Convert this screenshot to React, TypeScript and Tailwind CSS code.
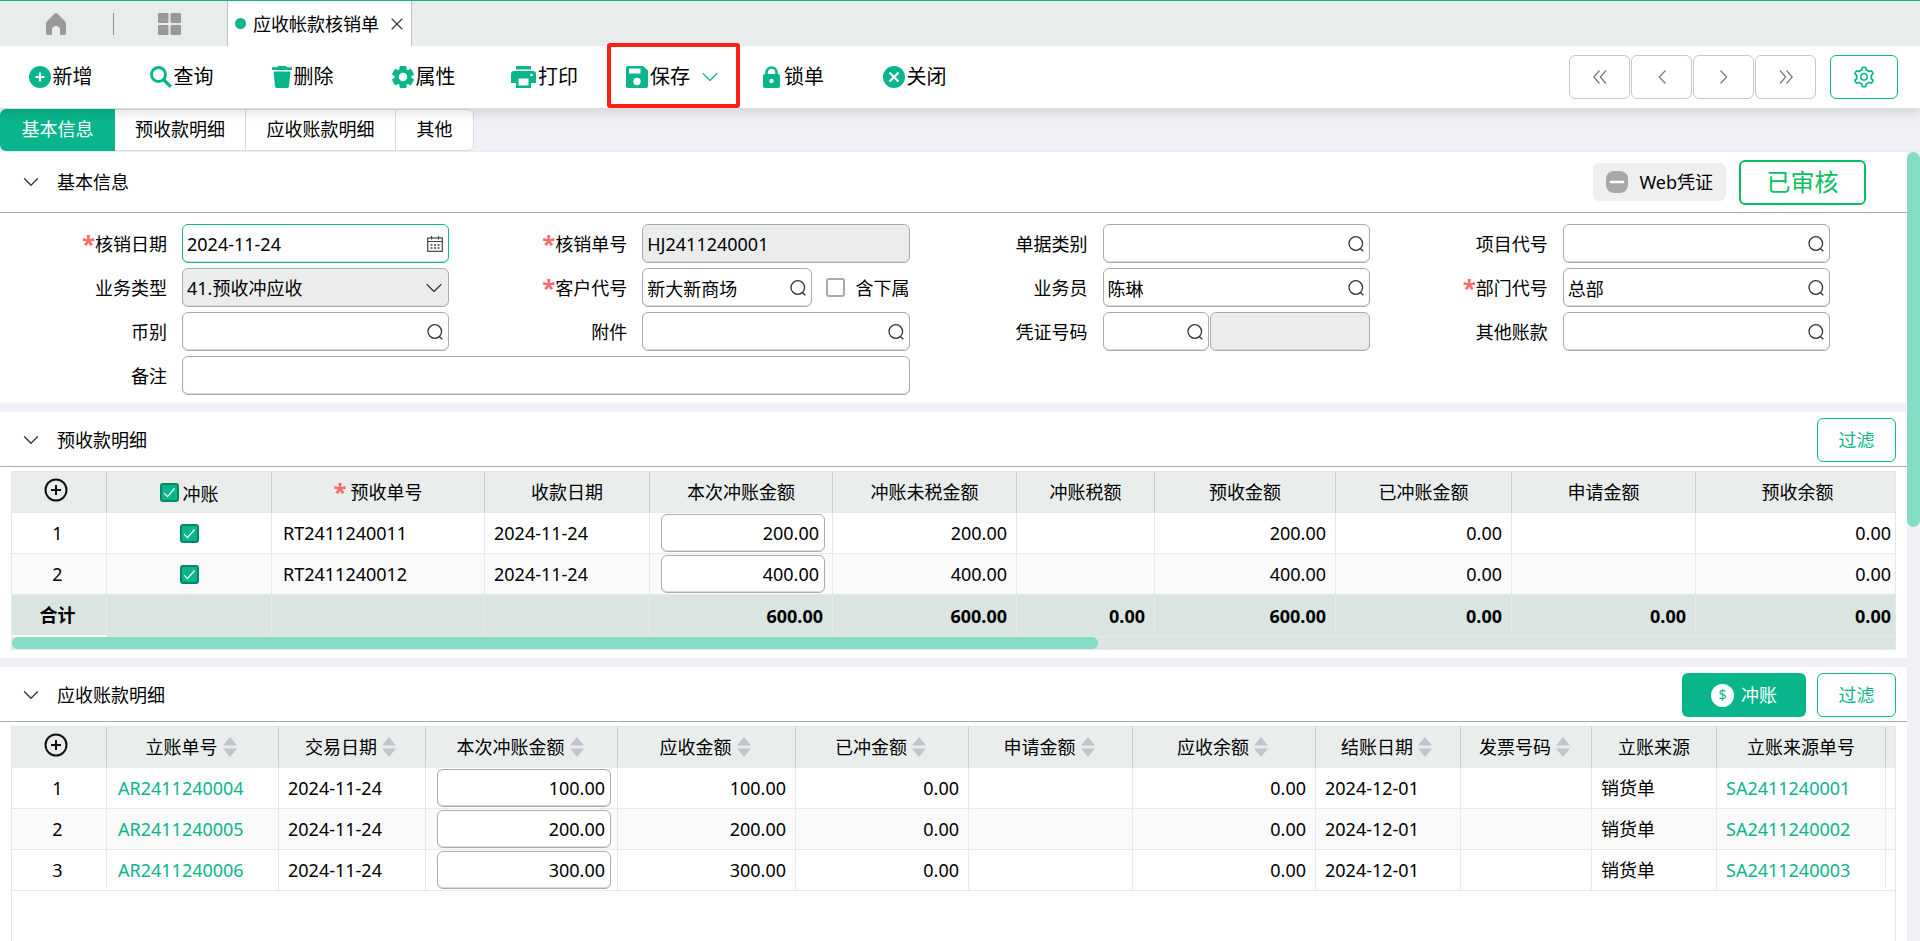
import type { ReactNode } from "react";
import { ChevronDown, X } from "lucide-react";
import { AiOutlineSetting } from "react-icons/ai";

/* ---------- icons ---------- */

const HomeIcon = () => (
  <svg viewBox="0 0 22 22" className="size-[22px] text-[#999]" fill="currentColor">
    <path d="M11 0c.6 0 1 .3 1.500.7L20 8.200c.7.700 1 1.500 1 2.500V20a2 2 0 0 1-2 2h-4v-5a4 4 0 0 0-8 0V22H3a2 2 0 0 1-2-2v-9.300c0-1 .3-1.800 1-2.500L9.500.7C10 .3 10.400 0 11 0z" />
  </svg>
);

const GridIcon = () => (
  <svg viewBox="0 0 23 22" className="h-[22px] w-[23px] text-[#999]" fill="currentColor">
    <rect width="10.500" height="10" rx="1" />
    <rect x="12.500" width="10.500" height="10" rx="1" />
    <rect y="12" width="10.500" height="10" rx="1" />
    <rect x="12.500" y="12" width="10.500" height="10" rx="1" />
  </svg>
);

const PlusCircleIcon = () => (
  <svg viewBox="0 0 22 22" className="size-[22px]">
    <circle cx="11" cy="11" r="11" fill="currentColor" />
    <path d="M11 6.500v9M6.500 11h9" stroke="#fff" strokeWidth="2.200" />
  </svg>
);

const FindIcon = () => (
  <svg viewBox="0 0 22 22" className="size-[22px]" fill="none" stroke="currentColor">
    <circle cx="8.500" cy="8.500" r="7" strokeWidth="3" />
    <path d="M13.500 13.500l7.300 7.300" strokeWidth="3.200" />
  </svg>
);

const TrashIcon = () => (
  <svg viewBox="0 0 20 22" className="h-[22px] w-5" fill="currentColor">
    <path d="M6 0h8l1 1.200h5V4H0V1.200h5z" />
    <path d="M1.500 5.500h17L17 20.200c-.1 1-.9 1.800-2 1.800H5c-1.100 0-1.900-.8-2-1.800z" />
  </svg>
);

const GearIcon = () => (
  <svg viewBox="0 0 22 22" className="size-[22px]">
    <g fill="currentColor">
      <rect x="7.500" y="0" width="7" height="22" rx="1" />
      <rect x="7.500" y="0" width="7" height="22" rx="1" transform="rotate(60 11 11)" />
      <rect x="7.500" y="0" width="7" height="22" rx="1" transform="rotate(120 11 11)" />
      <circle cx="11" cy="11" r="8.500" />
    </g>
    <circle cx="11" cy="11" r="4.200" fill="#fff" />
  </svg>
);

const PrinterIcon = () => (
  <svg viewBox="0 0 25 22" className="h-[22px] w-[25px]">
    <g fill="currentColor">
      <rect x="5" width="15" height="3.500" />
      <path d="M3 5h19a3 3 0 0 1 3 3v9h-5v5H5v-5H0V8a3 3 0 0 1 3-3z" />
    </g>
    <rect x="7.500" y="12.500" width="10" height="7" fill="#fff" />
    <circle cx="20.500" cy="9" r="1.300" fill="#fff" />
  </svg>
);

const SaveIcon = () => (
  <svg viewBox="0 0 22 22" className="size-[22px]">
    <path d="M2 0h15l5 4.500V20a2 2 0 0 1-2 2H2a2 2 0 0 1-2-2V2a2 2 0 0 1 2-2z" fill="currentColor" />
    <rect x="3" y="2.500" width="11.500" height="5" fill="#fff" />
    <circle cx="11" cy="15.500" r="3.700" fill="#fff" />
  </svg>
);

const LockIcon = () => (
  <svg viewBox="0 0 17 22" className="mr-0.5 h-[22px] w-[17px]">
    <path d="M3.500 9V6.500a5 5 0 0 1 10 0V9" fill="none" stroke="currentColor" strokeWidth="2.600" />
    <rect y="8" width="17" height="14" rx="2" fill="currentColor" />
    <circle cx="8.500" cy="15" r="2.200" fill="#fff" />
  </svg>
);

const CloseCircleIcon = () => (
  <svg viewBox="0 0 22 22" className="size-[22px]">
    <circle cx="11" cy="11" r="11" fill="currentColor" />
    <path d="M6.500 6.500l9 9M15.500 6.500l-9 9" stroke="#fff" strokeWidth="2.200" />
  </svg>
);

const LookupIcon = () => (
  <svg viewBox="0 0 16 16" className="size-4 text-[#333]" fill="none" stroke="currentColor" strokeWidth="1.300">
    <circle cx="7.800" cy="7.500" r="6.800" />
    <path d="M12.300 12.500l3 2.700" />
  </svg>
);

const CalendarIcon = () => (
  <svg viewBox="0 0 16 16" className="size-4 text-[#444]" fill="none" stroke="currentColor" strokeWidth="1.200">
    <rect x=".7" y="2" width="14.600" height="13.300" />
    <path d="M.7 5.500h14.600M4.500 0v3.500M11.500 0v3.500" />
    <path d="M3.500 9h2M7 9h2M10.500 9h2M3.500 12h2M7 12h2M10.500 12h2" strokeWidth="1.400" />
  </svg>
);

const AddRowIcon = () => (
  <svg viewBox="0 0 24 24" className="size-6" fill="none" stroke="#111" strokeWidth="2">
    <circle cx="12" cy="12" r="10.500" />
    <path d="M12 7v10M7 12h10" />
  </svg>
);

const SortIcon = () => (
  <svg viewBox="0 0 14 20" className="h-5 w-3.5" fill="#c0c4cc">
    <path d="M7 0l7 8.500H0zM7 20l7-8.500H0z" />
  </svg>
);

const PagerIcon = ({ d }: { d: string }) => (
  <svg viewBox="0 0 14 14" className="size-3.5" fill="none" stroke="currentColor" strokeWidth="1.200">
    <path d={d} />
  </svg>
);

/* ---------- small controls ---------- */

const Star = () => <span className="text-2xl leading-none font-bold text-[#f56c6c]">*</span>;

function TickBox({ id, label, checked = false }: { id: string; label?: string; checked?: boolean }) {
  return (
    <span className="grid">
      <input
        id={id}
        type="checkbox"
        aria-label={label}
        defaultChecked={checked}
        className="peer col-start-1 row-start-1 size-[19px] appearance-none rounded-[3px] border-2 border-[#aaa] bg-white checked:border-[#078764] checked:bg-[#09b68b]"
      />
      <svg
        viewBox="0 0 19 19"
        className="pointer-events-none invisible col-start-1 row-start-1 size-[19px] peer-checked:visible"
        fill="none"
        stroke="#fff"
        strokeWidth="1.200"
      >
        <path d="M4 10.200l3.500 3.500L14.500 5.500" />
      </svg>
    </span>
  );
}

const boxBase = "flex h-[39px] min-w-0 items-center rounded-md border shadow-[inset_0_-1px_0_#dcdcdc]";

function Box({ id, value = "", icon, tone = "plain", grow = "flex-1", label }: {
  id: string;
  value?: string;
  icon?: "search" | "date";
  tone?: "plain" | "gray" | "focus";
  grow?: string;
  label?: string;
}) {
  const look =
    tone === "gray" ? "border-[#aaa] bg-[#ebedec]" : tone === "focus" ? "border-[#09b68b] bg-white" : "border-[#aaa] bg-white";
  return (
    <div className={`${boxBase} ${look} ${grow}`}>
      <input
        id={id}
        type="text"
        aria-label={label}
        defaultValue={value}
        readOnly={tone === "gray"}
        className="h-full w-full min-w-0 flex-1 bg-transparent pl-1 outline-none"
      />
      {icon && (
        <button type="button" aria-label={icon === "date" ? "选择日期" : "查找"} className="mr-[5px] shrink-0">
          {icon === "date" ? <CalendarIcon /> : <LookupIcon />}
        </button>
      )}
    </div>
  );
}

function Field({ id, label, required, wide, children }: {
  id: string;
  label: string;
  required?: boolean;
  wide?: boolean;
  children: ReactNode;
}) {
  return (
    <div className={`flex items-center ${wide ? "col-span-2" : ""}`}>
      <label htmlFor={id} className="flex w-[167px] shrink-0 items-center justify-end">
        {required && <Star />}
        {label}
      </label>
      <div className="ml-[15px] flex min-w-0 flex-1 items-center">{children}</div>
    </div>
  );
}

function SectionHeader({ title, tall, children }: { title: string; tall?: boolean; children: ReactNode }) {
  return (
    <header className={`flex items-center border-b border-[#aaa] pl-[18px] ${tall ? "h-[61px]" : "h-[55px] pt-0.5"}`}>
      <button type="button" className="flex items-center gap-[13px]">
        <ChevronDown size={26} strokeWidth={1.200} className="text-[#333]" />
        <h2>{title}</h2>
      </button>
      <div className="ml-auto flex items-center">{children}</div>
    </header>
  );
}

const FilterButton = () => (
  <button type="button" className="mr-[11px] h-11 w-[79px] rounded-md border border-[#09b68b] text-[#09b68b]">
    过滤
  </button>
);

const th = "h-[41px] border-r border-b border-r-[#c6cbdc] border-b-[#e8eaea] bg-[#e9edec] p-0 text-center font-normal last:border-r-0";
const td = "h-[41px] border-r border-b border-[#e8e8e8] px-[9px] py-0 whitespace-nowrap last:border-r-0";
const rowNo = "h-[41px] border-r border-b border-[#e8e8e8] py-0 pr-[3px] pl-0 text-center";

const AddRowButton = () => (
  <button type="button" aria-label="增加行" className="flex w-full justify-center pr-[7px] pb-1">
    <AddRowIcon />
  </button>
);

const Amount = ({ id, value, label }: { id: string; value: string; label: string }) => (
  <input
    id={id}
    type="text"
    aria-label={label}
    defaultValue={value}
    className="block h-[38px] w-full rounded-md border border-[#aaa] bg-white pr-[5px] text-right shadow-[inset_0_-1px_0_#dcdcdc] outline-none"
  />
);

/* ---------- data ---------- */

const tools: { label: string; icon: ReactNode; save?: boolean }[] = [
  { label: "新增", icon: <PlusCircleIcon /> },
  { label: "查询", icon: <FindIcon /> },
  { label: "删除", icon: <TrashIcon /> },
  { label: "属性", icon: <GearIcon /> },
  { label: "打印", icon: <PrinterIcon /> },
  { label: "保存", icon: <SaveIcon />, save: true },
  { label: "锁单", icon: <LockIcon /> },
  { label: "关闭", icon: <CloseCircleIcon /> },
];

const pagers = [
  { label: "首笔", d: "M6.500 .5L.8 7l5.700 6.500M13 .5L7.300 7l5.700 6.500" },
  { label: "上一笔", d: "M10.500 .5L4.300 7l6.200 6.500" },
  { label: "下一笔", d: "M3.500 .5L9.700 7l-6.200 6.500" },
  { label: "末笔", d: "M1 .5L6.700 7L1 13.500M7.500 .5L13.200 7l-5.700 6.500" },
];

const prepaid = [
  { no: "RT2411240011", date: "2024-11-24", amount: "200.00" },
  { no: "RT2411240012", date: "2024-11-24", amount: "400.00" },
];

const receivable = [
  { no: "AR2411240004", amount: "100.00", source: "SA2411240001" },
  { no: "AR2411240005", amount: "200.00", source: "SA2411240002" },
  { no: "AR2411240006", amount: "300.00", source: "SA2411240003" },
];

const receivableHeads = [
  { label: "立账单号", sort: true },
  { label: "交易日期", sort: true },
  { label: "本次冲账金额", sort: true },
  { label: "应收金额", sort: true },
  { label: "已冲金额", sort: true },
  { label: "申请金额", sort: true },
  { label: "应收余额", sort: true },
  { label: "结账日期", sort: true },
  { label: "发票号码", sort: true },
  { label: "立账来源", sort: false },
  { label: "立账来源单号", sort: false },
];

/* ---------- page parts ---------- */

function TopBar() {
  return (
    <div className="flex h-[46px] shrink-0 border-t border-[#09b68b] bg-[#e8edeb]">
      <nav className="flex w-[227px] shrink-0 items-center pl-[45px]">
        <button type="button" aria-label="首页"><HomeIcon /></button>
        <span className="ml-[46px] h-[22px] w-px bg-[#8f9392]" />
        <button type="button" aria-label="菜单" className="ml-11"><GridIcon /></button>
      </nav>
      <div className="flex w-[185px] items-center border-x border-[#bfc4c2] bg-white pl-[7px]">
        <span className="size-[11px] rounded-full bg-[#09b68b]" />
        <span className="ml-[7px] whitespace-nowrap">应收帐款核销单</span>
        <button type="button" aria-label="关闭标签" className="ml-2">
          <X size={20} strokeWidth={1.300} className="text-[#333]" />
        </button>
      </div>
    </div>
  );
}

function Toolbar() {
  return (
    <div className="relative z-10 flex h-[62px] shrink-0 items-center bg-white shadow-[0_7px_8px_rgba(0,0,0,0.09)]">
      {tools.map((t) => (
        <div key={t.label} className={`flex h-full shrink-0 items-center ${t.save ? "relative w-32 pl-[21px]" : "w-[121px] justify-center"}`}>
          <button type="button" className="flex items-center gap-0.5 text-xl text-[#09b68b]">
            {t.icon}
            <span className="whitespace-nowrap text-black">{t.label}</span>
          </button>
          {t.save && (
            <>
              <button type="button" aria-label="更多保存选项" className="ml-1.5 text-[#09b68b]">
                <ChevronDown size={28} strokeWidth={1} />
              </button>
              <span className="pointer-events-none absolute -top-[3px] bottom-0 left-0.5 w-[133px] rounded-[3px] border-4 border-[#ff2015]" />
            </>
          )}
        </div>
      ))}
      <div className="ml-auto flex items-center gap-px pr-[22px]">
        {pagers.map((p) => (
          <button
            key={p.label}
            type="button"
            aria-label={p.label}
            className="flex h-11 w-[61px] items-center justify-center rounded-md border border-[#c8c8c8] text-[#777]"
          >
            <PagerIcon d={p.d} />
          </button>
        ))}
        <button type="button" aria-label="设置" className="ml-[13px] flex h-11 w-[68px] items-center justify-center rounded-md border border-[#09b68b] text-[#09b68b]">
          <AiOutlineSetting size={24} />
        </button>
      </div>
    </div>
  );
}

function PageTabs() {
  return (
    <div role="tablist" className="flex h-11 shrink-0 border-b border-[#e9ebef] bg-[#eff1f6] pt-px">
      <button role="tab" aria-selected="true" type="button" className="h-[42px] w-[115px] rounded-l-md bg-[#09b68b] pb-0.5 text-white">基本信息</button>
      <button role="tab" type="button" className="h-[42px] w-[131px] border-y border-r border-[#d9dce5] bg-white pb-0.5">预收款明细</button>
      <button role="tab" type="button" className="h-[42px] w-[150px] border-y border-r border-[#d9dce5] bg-white pb-0.5">应收账款明细</button>
      <button role="tab" type="button" className="h-[42px] w-[78px] rounded-r-md border-y border-r border-[#d9dce5] bg-white pb-0.5">其他</button>
    </div>
  );
}

function BasicInfo() {
  return (
    <section className="bg-white">
      <SectionHeader title="基本信息" tall>
        <button type="button" className="mr-[13px] flex h-[38px] items-center gap-[11px] rounded-md bg-[#efefef] px-[13px]">
          <svg viewBox="0 0 22 22" className="size-[22px]">
            <rect width="22" height="22" rx="8" fill="#a8a8a8" />
            <path d="M5 11h12" stroke="#fff" strokeWidth="2.600" strokeLinecap="round" />
          </svg>
          Web凭证
        </button>
        <span className="mr-[41px] flex h-[45px] w-[127px] items-center justify-center rounded-md border-2 border-[#07c160] text-2xl text-[#07c160]">
          已审核
        </span>
      </SectionHeader>
      <form className="grid grid-cols-4 gap-x-[11px] gap-y-[5px] pt-[11px] pr-[77px] pb-2">
        <Field id="date" label="核销日期" required><Box id="date" value="2024-11-24" icon="date" tone="focus" /></Field>
        <Field id="no" label="核销单号" required><Box id="no" value="HJ2411240001" tone="gray" /></Field>
        <Field id="category" label="单据类别"><Box id="category" icon="search" /></Field>
        <Field id="project" label="项目代号"><Box id="project" icon="search" /></Field>

        <Field id="type" label="业务类型">
          <div className={`${boxBase} relative flex-1 border-[#aaa] bg-[#ebedec]`}>
            <select id="type" className="h-full w-full appearance-none bg-transparent pl-1 outline-none">
              <option>41.预收冲应收</option>
            </select>
            <ChevronDown size={28} strokeWidth={1} className="pointer-events-none absolute right-0 text-[#333]" />
          </div>
        </Field>
        <Field id="customer" label="客户代号" required>
          <Box id="customer" value="新大新商场" icon="search" />
          <span className="ml-3.5 flex items-center gap-[11px]">
            <TickBox id="sub" />
            <label htmlFor="sub" className="whitespace-nowrap">含下属</label>
          </span>
        </Field>
        <Field id="staff" label="业务员"><Box id="staff" value="陈琳" icon="search" /></Field>
        <Field id="dept" label="部门代号" required><Box id="dept" value="总部" icon="search" /></Field>

        <Field id="currency" label="币别"><Box id="currency" icon="search" /></Field>
        <Field id="attach" label="附件"><Box id="attach" icon="search" /></Field>
        <Field id="voucher" label="凭证号码">
          <Box id="voucher" icon="search" grow="mr-px w-2/5" />
          <Box id="voucher-no" tone="gray" label="凭证号" />
        </Field>
        <Field id="other" label="其他账款"><Box id="other" icon="search" /></Field>

        <Field id="remark" label="备注" wide><Box id="remark" /></Field>
      </form>
    </section>
  );
}

function PrepaidTable() {
  const sum = "h-[42px] border-r border-b border-[#e4ebe9] bg-[#dae5e2] px-[9px] py-0 text-right font-bold last:border-r-0 last:pr-1";
  return (
    <section className="bg-white pb-2">
      <SectionHeader title="预收款明细"><FilterButton /></SectionHeader>
      <div className="mx-[11px] mt-1 border border-[#e4e7e7]">
        <table className="w-full table-fixed border-separate border-spacing-0">
          <colgroup>
            <col className="w-[95px]" /><col className="w-[165px]" /><col className="w-[213px]" /><col className="w-[165px]" />
            <col className="w-[183px]" /><col className="w-[184px]" /><col className="w-[138px]" /><col className="w-[181px]" />
            <col className="w-[176px]" /><col className="w-[184px]" /><col />
          </colgroup>
          <thead>
            <tr>
              <th className={th}><AddRowButton /></th>
              <th className={th}>
                <span className="flex items-center justify-center gap-1">
                  <TickBox id="all" checked />
                  <label htmlFor="all" className="pt-1">冲账</label>
                </span>
              </th>
              <th className={th}><span className="flex items-center justify-center gap-1"><Star />预收单号</span></th>
              <th className={th}>收款日期</th>
              <th className={th}>本次冲账金额</th>
              <th className={th}>冲账未税金额</th>
              <th className={th}>冲账税额</th>
              <th className={th}>预收金额</th>
              <th className={th}>已冲账金额</th>
              <th className={th}>申请金额</th>
              <th className={`${th} last:pl-1`}>预收余额</th>
            </tr>
          </thead>
          <tbody>
            {prepaid.map((r, i) => (
              <tr key={r.no} className="even:bg-[#fafafa]">
                <td className={rowNo}>{i + 1}</td>
                <td className={td}><span className="flex justify-center"><TickBox id={`row${i}`} label="冲账" checked /></span></td>
                <td className={`${td} pl-[11px]`}>{r.no}</td>
                <td className={td}>{r.date}</td>
                <td className="border-r border-b border-[#e8e8e8] py-0 pr-[7px] pl-[11px]"><Amount id={`prepaid${i}`} label="本次冲账金额" value={r.amount} /></td>
                <td className={`${td} text-right`}>{r.amount}</td>
                <td className={td} />
                <td className={`${td} text-right`}>{r.amount}</td>
                <td className={`${td} text-right`}>0.00</td>
                <td className={td} />
                <td className={`${td} text-right last:pr-1`}>0.00</td>
              </tr>
            ))}
          </tbody>
          <tfoot>
            <tr>
              <th scope="row" className="h-[42px] border-r border-b-2 border-r-[#e4ebe9] border-b-white bg-[#dae5e2] py-0 pr-[3px] pl-0 text-center font-bold">合计</th>
              <td className={sum} /><td className={sum} /><td className={sum} />
              <td className={sum}>600.00</td>
              <td className={sum}>600.00</td>
              <td className={sum}>0.00</td>
              <td className={sum}>600.00</td>
              <td className={sum}>0.00</td>
              <td className={sum}>0.00</td>
              <td className={sum}>0.00</td>
            </tr>
          </tfoot>
        </table>
        <div className="h-3 bg-[#dae5e2]">
          <div className="h-full w-[57.7%] rounded-md bg-[#84dcc6]" />
        </div>
      </div>
    </section>
  );
}

function ReceivableTable() {
  return (
    <section className="flex min-h-0 flex-1 flex-col bg-white">
      <SectionHeader title="应收账款明细">
        <button type="button" className="mr-[11px] flex h-11 w-[124px] items-center justify-center gap-[7px] rounded-md bg-[#09b68b] text-white">
          <span className="flex size-[23px] items-center justify-center rounded-full bg-white text-sm text-[#09b68b]">$</span>
          冲账
        </button>
        <FilterButton />
      </SectionHeader>
      <div className="mx-[11px] mt-1 flex-1 border border-b-0 border-[#e4e7e7]">
        <table className="w-full table-fixed border-separate border-spacing-0">
          <colgroup>
            <col className="w-[95px]" /><col className="w-[172px]" /><col className="w-[147px]" /><col className="w-[192px]" />
            <col className="w-[178px]" /><col className="w-[173px]" /><col className="w-[164px]" /><col className="w-[183px]" />
            <col className="w-[145px]" /><col className="w-[131px]" /><col className="w-[125px]" /><col className="w-[169px]" /><col />
          </colgroup>
          <thead>
            <tr>
              <th className={th}><AddRowButton /></th>
              {receivableHeads.map((h) => (
                <th key={h.label} className={th}>
                  <span className={`flex items-center justify-center gap-[5px] whitespace-nowrap ${h.sort ? "pr-[3px]" : ""}`}>
                    {h.label}
                    {h.sort && <SortIcon />}
                  </span>
                </th>
              ))}
              <th className={th} />
            </tr>
          </thead>
          <tbody>
            {receivable.map((r, i) => (
              <tr key={r.no} className="even:bg-[#fafafa]">
                <td className={rowNo}>{i + 1}</td>
                <td className={`${td} pl-[11px]`}><a href="#ar" className="text-[#09b68b]">{r.no}</a></td>
                <td className={td}>2024-11-24</td>
                <td className="border-r border-b border-[#e8e8e8] py-0 pr-1.5 pl-[11px]"><Amount id={`receivable${i}`} label="本次冲账金额" value={r.amount} /></td>
                <td className={`${td} text-right`}>{r.amount}</td>
                <td className={`${td} text-right`}>0.00</td>
                <td className={td} />
                <td className={`${td} text-right`}>0.00</td>
                <td className={td}>2024-12-01</td>
                <td className={td} />
                <td className={td}>销货单</td>
                <td className={td}><a href="#sa" className="text-[#09b68b]">{r.source}</a></td>
                <td className="border-b border-[#e8e8e8]" />
              </tr>
            ))}
          </tbody>
        </table>
      </div>
    </section>
  );
}

export default function App() {
  return (
    <div className="flex h-screen flex-col overflow-hidden bg-[#eff1f6] font-['Noto_Sans','Noto_Sans_CJK_SC',sans-serif] text-[18px] leading-6 text-black">
      <TopBar />
      <Toolbar />
      <PageTabs />
      <div className="flex min-h-0 flex-1">
        <main className="flex min-w-0 flex-1 flex-col gap-[9px]">
          <BasicInfo />
          <PrepaidTable />
          <ReceivableTable />
        </main>
        <div className="w-[13px] shrink-0">
          <div className="h-[375px] rounded-full bg-[#84dcc6]" />
        </div>
      </div>
    </div>
  );
}
